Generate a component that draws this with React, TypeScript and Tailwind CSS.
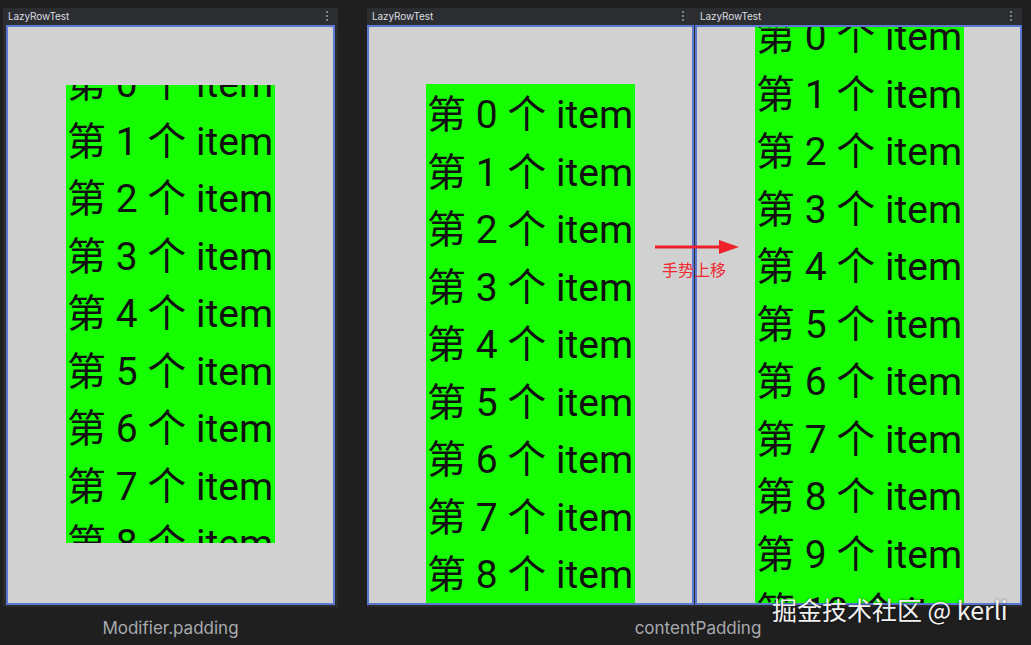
import React from "react";

const font = { fontFamily: 'Roboto, "Noto Sans CJK SC", sans-serif' };

function Items({ count, offset }: { count: number; offset: string }) {
  return (
    <div className={`flex flex-col ${offset}`}>
      {Array.from({ length: count }).map((_, i) => (
        <div
          key={i}
          className="h-[57.5px] leading-[57.5px] text-[39px] text-[#111] whitespace-nowrap pl-[1px]"
          style={font}
        >
          第 {i} 个 item
        </div>
      ))}
    </div>
  );
}

function TitleBar() {
  return (
    <div className="h-[17px] flex items-center justify-between pl-[5px] pr-[10px] pb-[2px] bg-[#2b2d30]">
      <span className="text-[10px] leading-[12px] text-[#dcdde0] font-['Inter',sans-serif] tracking-[-0.1px]">LazyRowTest</span>
      <div className="flex flex-col gap-[2px]">
        <span className="w-[2px] h-[2px] rounded-full bg-[#9a9ca0]" />
        <span className="w-[2px] h-[2px] rounded-full bg-[#9a9ca0]" />
        <span className="w-[2px] h-[2px] rounded-full bg-[#9a9ca0]" />
      </div>
    </div>
  );
}

export default function App() {
  return (
    <div className="relative w-[1031px] h-[645px] bg-[#1f1f20] overflow-hidden font-['Inter',sans-serif]">
      <div className="flex pt-[8px]">
        {/* Panel 1 */}
        <div className="ml-[3px] w-[335px] h-[599px] bg-[#2b2b2c] flex flex-col">
          <TitleBar />
          <div className="mx-[3px] w-[329px] h-[580px] border-2 border-[#5b79d3] bg-[#d1d1d1] flex justify-center overflow-hidden">
            <div className="mt-[58px] w-[209px] h-[458px] bg-[#16ff00] overflow-hidden">
              <Items count={10} offset="-mt-[29px]" />
            </div>
          </div>
        </div>

        {/* Panels 2 & 3 */}
        <div className="ml-[29px] w-[655px] h-[599px] bg-[#2b2b2c] flex">
          <div className="w-[327px] flex flex-col">
            <TitleBar />
            <div className="w-[327px] h-[580px] border-2 border-[#5b79d3] bg-[#d1d1d1] flex justify-center overflow-hidden">
              <div className="mt-[57px] w-[209px] h-[600px] bg-[#16ff00] overflow-hidden">
                <Items count={10} offset="mt-[3px]" />
              </div>
            </div>
          </div>
          <div className="ml-[1px] w-[327px] flex flex-col">
            <TitleBar />
            <div className="w-[327px] h-[580px] border-2 border-[#5b79d3] bg-[#d1d1d1] flex justify-center overflow-hidden">
              <div className="ml-[2px] w-[209px] h-[600px] bg-[#16ff00] overflow-hidden">
                <Items count={12} offset="-mt-[18px]" />
              </div>
            </div>
          </div>
        </div>
      </div>

      {/* Labels */}
      <div className="flex h-[38px] items-center pt-[6px]">
        <div className="ml-[3px] w-[335px] text-center text-[17px] text-[#a8aaae]">Modifier.padding</div>
        <div className="ml-[29px] w-[655px] pl-[7px] text-center text-[17px] text-[#a8aaae]">contentPadding</div>
      </div>

      {/* Gesture annotation */}
      <div className="absolute left-[655px] top-[238px] w-[86px] flex flex-col items-center">
        <svg width="86" height="18" viewBox="0 0 86 18">
          <line x1="0" y1="9" x2="70" y2="9" stroke="#f0202a" strokeWidth="3" />
          <polygon points="64,2 84,9 64,16" fill="#f0202a" />
        </svg>
        <span
          className="mt-[4px] -ml-[8px] text-[16px] leading-[18px] text-[#ee2a30]"
          style={{ fontFamily: '"Noto Sans CJK SC", sans-serif' }}
        >
          手势上移
        </span>
      </div>

      {/* Watermark */}
      <div
        className="absolute left-[772px] top-[593px] text-[25px] leading-[32px] text-[#f2f2f2] whitespace-nowrap [text-shadow:0_0_3px_rgba(0,0,0,0.6)]"
        style={{ fontFamily: '"Noto Sans CJK SC", sans-serif' }}
      >
        掘金技术社区 @ kerli
      </div>
    </div>
  );
}
